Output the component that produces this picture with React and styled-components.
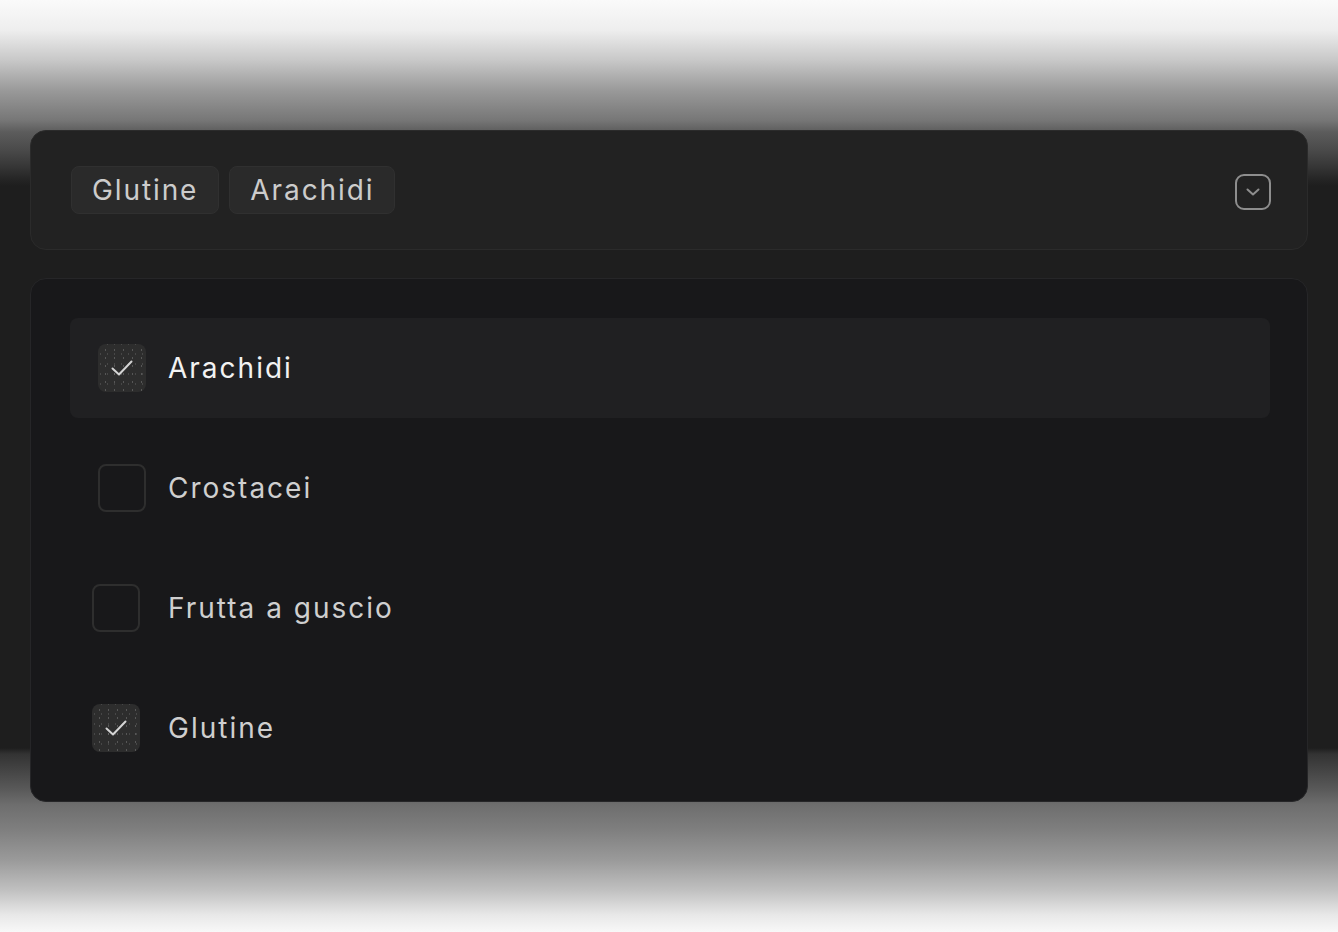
import React from "react";
import styled, { createGlobalStyle } from "styled-components";

const Global = createGlobalStyle`
  html, body { margin: 0; padding: 0; }
  body {
    min-height: 932px;
    font-family: "Inter", "Open Sans", sans-serif;
    background: linear-gradient(
      to bottom,
      #fafafa 0px,
      #eeeeee 30px,
      #c8c8c8 60px,
      #9a9a9a 90px,
      #777777 120px,
      #5c5c5c 132px,
      #4a4a4a 150px,
      #383838 165px,
      #242424 180px,
      #1e1e1e 186px,
      #1e1e1e 748px,
      #333333 754px,
      #444444 770px,
      #5a5a5a 790px,
      #6e6e6e 805px,
      #7f7f7f 830px,
      #9a9a9a 860px,
      #c0c0c0 890px,
      #e8e8e8 915px,
      #f8f8f8 932px
    );
    background-repeat: no-repeat;
    background-color: #f8f8f8;
  }
`;

const Page = styled.div`
  padding: 130px 30px 130px;
  display: flex;
  flex-direction: column;
  gap: 28px;
`;

const Trigger = styled.div`
  height: 120px;
  box-sizing: border-box;
  background: #222222;
  border: 1px solid #2b2b2b;
  border-radius: 16px;
  display: flex;
  align-items: center;
  justify-content: space-between;
  padding: 0 35px 0 40px;
`;

const Tags = styled.div`
  display: flex;
  gap: 10px;
`;

const Tag = styled.span`
  height: 48px;
  box-sizing: border-box;
  display: inline-flex;
  align-items: center;
  padding: 0 20px;
  background: #2a2a2a;
  border: 1px solid #303030;
  border-radius: 8px;
  color: #cccccc;
  font-size: 28px;
  letter-spacing: 1.9px;
`;

const IconButton = styled.div`
  width: 38px;
  height: 38px;
  margin-top: 4px;
  display: flex;
  align-items: center;
  justify-content: center;
  color: #8e8e8e;
`;

const List = styled.div`
  box-sizing: border-box;
  height: 524px;
  background: #18181a;
  border: 1px solid #262628;
  border-radius: 16px;
  padding: 39px 37px 23px 39px;
  display: flex;
  flex-direction: column;
  gap: 20px;
`;

const Row = styled.div`
  height: 100px;
  display: flex;
  align-items: center;
  border-radius: 8px;
  background: ${(p) => (p.$active ? "#202022" : "transparent")};
  padding-left: ${(p) => (p.$nudge ? "22px" : "28px")};
`;

const Box = styled.span`
  width: 48px;
  height: 48px;
  flex: none;
  box-sizing: border-box;
  border-radius: 8px;
  margin-right: ${(p) => (p.$nudge ? "28px" : "22px")};
  display: flex;
  align-items: center;
  justify-content: center;
  color: #d4d4d4;
  ${(p) =>
    p.$checked
      ? `
    background-color: #2d2d2d;
    background-image:
      radial-gradient(circle, rgba(130,130,130,0.5) 0.6px, transparent 1px),
      radial-gradient(circle, rgba(110,110,110,0.4) 0.6px, transparent 1px);
    background-size: 9px 8px, 7px 10px;
    background-position: 3px 2px, 6px 5px;
  `
      : `
    border: 2px solid #2e2e2e;
  `}
`;

const Label = styled.span`
  font-size: 28px;
  letter-spacing: 2px;
  color: ${(p) => (p.$active ? "#f2f2f2" : "#cfcfcf")};
`;

const Check = () => (
  <svg width="24" height="18" viewBox="0 0 24 18" fill="none">
    <path d="M2.5 9.5l6.5 6L21.5 2.5" stroke="currentColor" strokeWidth="2" strokeLinecap="round" strokeLinejoin="round" />
  </svg>
);

const ChevronSquare = () => (
  <svg width="38" height="38" viewBox="0 0 38 38" fill="none">
    <rect x="2" y="2" width="34" height="34" rx="8" stroke="currentColor" strokeWidth="2" />
    <path d="M13.5 16.5l5.5 5 5.5-5" stroke="currentColor" strokeWidth="2" strokeLinecap="round" strokeLinejoin="round" />
  </svg>
);

const items = [
  { label: "Arachidi", checked: true, active: true, nudge: false },
  { label: "Crostacei", checked: false, active: false, nudge: false },
  { label: "Frutta a guscio", checked: false, active: false, nudge: true },
  { label: "Glutine", checked: true, active: false, nudge: true },
];

export default function App() {
  return (
    <>
      <Global />
      <Page>
        <Trigger>
          <Tags>
            <Tag>Glutine</Tag>
            <Tag>Arachidi</Tag>
          </Tags>
          <IconButton>
            <ChevronSquare />
          </IconButton>
        </Trigger>
        <List>
          {items.map((it) => (
            <Row key={it.label} $active={it.active} $nudge={it.nudge}>
              <Box $checked={it.checked} $nudge={it.nudge}>
                {it.checked && <Check />}
              </Box>
              <Label $active={it.active}>{it.label}</Label>
            </Row>
          ))}
        </List>
      </Page>
    </>
  );
}
